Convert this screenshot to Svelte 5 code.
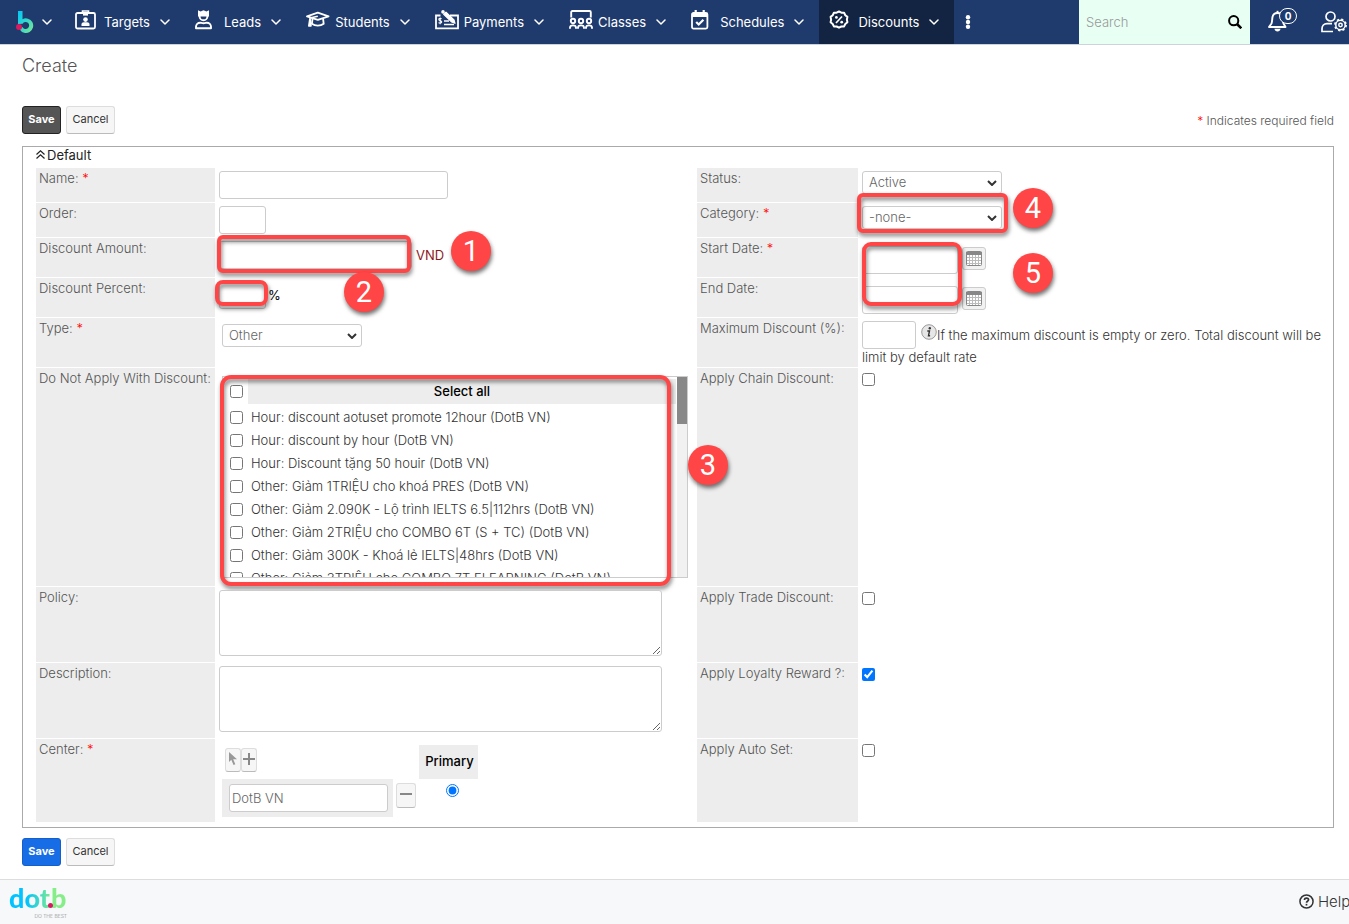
<script>
  const modules = [
    { name: 'Targets', icon: 'badge' },
    { name: 'Leads', icon: 'lead' },
    { name: 'Students', icon: 'cap' },
    { name: 'Payments', icon: 'cheque' },
    { name: 'Classes', icon: 'class' },
    { name: 'Schedules', icon: 'calendar' },
    { name: 'Discounts', icon: 'percent', active: true }
  ];

  const discounts = [
    'Hour: discount aotuset promote 12hour (DotB VN)',
    'Hour: discount by hour (DotB VN)',
    'Hour: Discount tặng 50 houir (DotB VN)',
    'Other: Giảm 1TRIỆU cho khoá PRES (DotB VN)',
    'Other: Giảm 2.090K - Lộ trình IELTS 6.5|112hrs (DotB VN)',
    'Other: Giảm 2TRIỆU cho COMBO 6T (S + TC) (DotB VN)',
    'Other: Giảm 300K - Khoá lẻ IELTS|48hrs (DotB VN)',
    'Other: Giảm 3TRIỆU cho COMBO 7T ELEARNING (DotB VN)'
  ];
</script>

{#snippet chevron()}
  <svg class="chevron" viewBox="0 0 10 6" width="10" height="6" aria-hidden="true">
    <path d="M1 1l4 4 4-4" fill="none" stroke="currentColor" stroke-width="1.5" stroke-linecap="round" stroke-linejoin="round" />
  </svg>
{/snippet}

{#snippet moduleIcon(kind)}
  {#if kind === 'badge'}
    <svg viewBox="0 0 22 20" width="22" height="20" fill="none" stroke="currentColor" stroke-width="1.8">
      <rect x="1" y="3" width="19" height="15.5" rx="1.5" />
      <path d="M7.5 3.5V1h6v2.5" stroke-width="1.6" />
      <rect x="8" y="2" width="5" height="3.6" fill="currentColor" stroke="none" />
      <circle cx="10.5" cy="9.6" r="2.3" fill="currentColor" stroke="none" />
      <path d="M6.5 16v-1.500c0-1.400 1-2.200 2.400-2.200h3.200c1.400 0 2.400.8 2.400 2.200V16z" fill="currentColor" stroke="none" />
    </svg>
  {:else if kind === 'lead'}
    <svg viewBox="0 0 18 20" width="18" height="20" fill="none" stroke="currentColor" stroke-width="1.9">
      <path d="M3 .3l2.600 1.300L8.500.2l2.900 1.400L14 .3v6.200H3z" fill="currentColor" stroke="none" />
      <path d="M4.600 5v1.400a3.900 3.900 0 0 0 7.800 0V5" />
      <path d="M1 18.200v-1.400c0-2.400 1.800-4.100 4.200-4.100 1 0 1.600.6 3.300.6s2.300-.6 3.300-.6c2.400 0 4.200 1.700 4.200 4.100v1.400z" stroke-linejoin="round" />
    </svg>
  {:else if kind === 'cap'}
    <svg viewBox="0 0 24 20" width="24" height="20" fill="none" stroke="currentColor" stroke-width="1.8" stroke-linejoin="round">
      <path d="M1 6.300L11.800 2.600 22.600 6.300 11.800 9.800z" />
      <path d="M11.800 6.300L4 8v3" stroke-width="1.5" />
      <path d="M6.500 8.800l-.6 5c3.300 2.400 8.500 2.400 11.800 0l-.6-5" />
      <path d="M3.900 9.500l-1 6.300h2z" fill="currentColor" />
    </svg>
  {:else if kind === 'cheque'}
    <svg viewBox="0 0 24 20" width="24" height="20" fill="none" stroke="currentColor" stroke-width="1.8">
      <path d="M5.500 5.500H1v12.800h22V5.500h-8" />
      <path d="M6.600 8.700c-1.800-.9-3.200 0-2.700 1.100.4 1 2.500.7 2.800 2 .2 1.300-1.800 1.800-3.200.8M5.200 7.500v6.800" stroke-width="1.1" />
      <path d="M9 11h5M9 14.500h10" stroke-width="1.5" />
      <path d="M8.700 4.300l8 7.700 3.300 1.300-1-3.400-8-7.700z" fill="currentColor" stroke-width="1.2" stroke-linejoin="round" />
      <circle cx="8" cy="1.9" r="1.8" fill="currentColor" stroke="none" />
    </svg>
  {:else if kind === 'class'}
    <svg viewBox="0 0 24 20" width="24" height="20" fill="none" stroke="currentColor" stroke-width="1.9">
      <path d="M2.200 7.500V2.200Q2.200 1 3.400 1h17.200q1.200 0 1.200 1.200v5.300" />
      <circle cx="4" cy="11" r="2.2" /><circle cx="12" cy="11" r="2.2" /><circle cx="20" cy="11" r="2.2" />
      <path d="M1 18.800v-1q0-2.400 3-2.400t3 2.400v1M9 18.800v-1q0-2.400 3-2.400t3 2.400v1M17 18.800v-1q0-2.400 3-2.400t3 2.400v1" />
    </svg>
  {:else if kind === 'calendar'}
    <svg viewBox="0 0 18 20" width="18" height="20" fill="none" stroke="currentColor" stroke-width="1.8">
      <rect x="1" y="3" width="15.4" height="15.6" rx="1.5" />
      <path d="M1 3h15.400v4H1z" fill="currentColor" stroke="none" />
      <path d="M4.700 0v4M12.700 0v4" stroke-width="2.2" />
      <path d="M5.200 12l2.500 2.500 4.700-4.800" stroke-width="2.2" />
    </svg>
  {:else}
    <svg viewBox="0 0 20 20" width="20" height="20" fill="none" stroke="currentColor" stroke-width="2">
      <path d="M10 1.500l2.400 1.200 2.700.1 1.200 2.400 2.100 1.700-.5 2.700.5 2.700-2.100 1.700-1.200 2.400-2.700.1-2.400 1.200-2.400-1.200-2.700-.1-1.200-2.400-2.100-1.700.5-2.700-.5-2.700 2.100-1.700 1.200-2.400 2.700-.1z" stroke-linejoin="round" />
      <path d="M13 6.500l-6 6.500" stroke-width="1.7" />
      <circle cx="7.4" cy="7.4" r="1.4" fill="currentColor" stroke="none" />
      <circle cx="12.7" cy="12.2" r="1.4" fill="currentColor" stroke="none" />
    </svg>
  {/if}
{/snippet}

{#snippet calendarGrid()}
  <svg viewBox="0 0 16 15" width="16" height="15" aria-hidden="true">
    <rect x=".5" y=".5" width="15" height="14" rx="1" fill="#fff" stroke="#888" />
    <path d="M0 1h16v3H0z" fill="#888" />
    <path d="M1 6.500h14M1 9.500h14M1 12.500h14M3.500 4v10M6.500 4v10M9.500 4v10M12.500 4v10" stroke="#bbb" />
  </svg>
{/snippet}

<header>
  <button class="brand" aria-label="Home">
    <svg viewBox="0 0 18 22" width="18" height="22">
      <defs>
        <linearGradient id="mark" x1="0" y1="0" x2="1" y2="1">
          <stop offset="0" stop-color="#00c8f8" /><stop offset=".5" stop-color="#35d6cc" /><stop offset="1" stop-color="#7eea8c" />
        </linearGradient>
      </defs>
      <path fill="url(#mark)" fill-rule="evenodd" d="M2 0h4.500v8.200A7.300 7.300 0 1 1 3.700 18.500L6.500 16A3.500 3.500 0 1 0 6.600 12.800L2 13z" />
      <circle cx="3" cy="16" r="3" fill="#d81b60" />
    </svg>
    {@render chevron()}
  </button>
  <nav>
    {#each modules as m}
      <button class="module" class:active={m.active}>
        <span class="slot" aria-hidden="true">{@render moduleIcon(m.icon)}</span>
        <span class="name">{m.name}</span>
        {@render chevron()}
      </button>
    {/each}
    <button class="more" aria-label="More">
      <svg viewBox="0 0 6 14" width="6" height="14" fill="currentColor">
        <circle cx="3" cy="2.2" r="2.2" /><circle cx="3" cy="7" r="2.2" /><circle cx="3" cy="11.8" r="2.2" />
      </svg>
    </button>
  </nav>
  <div class="search">
    <input type="search" placeholder="Search" aria-label="Search" />
    <button aria-label="Run search">
      <svg viewBox="0 0 14 14" width="14" height="14" fill="none" stroke="#000" stroke-width="2">
        <circle cx="5.7" cy="5.7" r="4.6" /><path d="M9 9l4.300 4.300" stroke-width="2.5" />
      </svg>
    </button>
  </div>
  <button class="bell" aria-label="Notifications">
    <svg viewBox="0 0 20 22" width="20" height="22" fill="none" stroke="currentColor" stroke-width="1.9">
      <path d="M1 17h16.500l-2-3.500c-.7-1.500-.6-4.500-1-6.500C14 4.500 12 3 9.500 3S5 4.500 4.500 7c-.4 2-.3 5-1 6.500z" stroke-linejoin="round" />
      <path d="M9.500 3V.8" /><path d="M6.500 18.800h6c-.3 1.700-1.300 2.600-3 2.600s-2.700-.9-3-2.600z" fill="currentColor" stroke="none" />
    </svg>
    <span class="count">0</span>
  </button>
  <button class="user" aria-label="User settings">
    <svg viewBox="0 0 26 22" width="26" height="22" fill="none" stroke="currentColor" stroke-width="1.7">
      <circle cx="9.5" cy="5.5" r="4.5" />
      <path d="M12 20.500H1v-2.700C1 14.500 3 12.700 6 12.700h5" />
      <circle cx="19.5" cy="14" r="4.7" stroke-width="1.5" />
      <circle cx="19.5" cy="14" r="5.6" stroke-width="1.7" stroke-dasharray="2.2 2.2" />
      <circle cx="19.5" cy="14" r="1.7" stroke-width="1.5" />
    </svg>
  </button>
</header>

<main>
  <h1>Create</h1>
  <div class="actions top">
    <button class="btn dark">Save</button>
    <button class="btn">Cancel</button>
    <p class="legend"><span class="req">*</span> Indicates required field</p>
  </div>

  <section class="panel">
    <h2>
      <svg viewBox="0 0 9 9" width="9" height="9" fill="none" stroke="currentColor" stroke-width="1.2" aria-hidden="true">
        <path d="M.5 4.500l4-3.700 4 3.700M.5 8.500l4-3.700 4 3.700" />
      </svg>
      Default
    </h2>

    <div class="row r-line">
      <label for="name">Name: <span class="req">*</span></label>
      <div class="cell"><input id="name" type="text" class="w-name" /></div>
      <label for="status">Status:</label>
      <div class="cell"><select id="status"><option>Active</option></select></div>
    </div>

    <div class="row r-line">
      <label for="order">Order:</label>
      <div class="cell"><input id="order" type="text" class="w-small" /></div>
      <label for="category">Category: <span class="req">*</span></label>
      <div class="cell">
        <select id="category"><option>-none-</option></select>
        <span class="mark m4"></span><span class="pin p4">4</span>
      </div>
    </div>

    <div class="row r-mid">
      <label for="amount">Discount Amount:</label>
      <div class="cell">
        <input id="amount" type="text" class="w-amount" /><span class="currency">VND</span>
        <span class="mark m1"></span><span class="pin p1">1</span>
      </div>
      <label for="start">Start Date: <span class="req">*</span></label>
      <div class="cell date">
        <input id="start" type="text" class="w-date" /><button class="cal" aria-label="Pick start date">{@render calendarGrid()}</button>
        <span class="mark m5"></span><span class="pin p5">5</span>
      </div>
    </div>

    <div class="row r-mid">
      <label for="percent">Discount Percent:</label>
      <div class="cell">
        <input id="percent" type="text" class="w-small" /><span class="unit">%</span>
        <span class="mark m2"></span><span class="pin p2">2</span>
      </div>
      <label for="end">End Date:</label>
      <div class="cell date">
        <input id="end" type="text" class="w-date" /><button class="cal" aria-label="Pick end date">{@render calendarGrid()}</button>
      </div>
    </div>

    <div class="row r-type">
      <label for="type">Type: <span class="req">*</span></label>
      <div class="cell inset"><select id="type"><option>Other</option></select></div>
      <label for="max">Maximum Discount (%):</label>
      <div class="cell prose">
        <input id="max" type="text" class="w-max" /><svg class="info" viewBox="0 0 16 16" width="16" height="16" aria-hidden="true">
          <circle cx="8" cy="8" r="7.3" fill="#e6e6e6" stroke="#999" />
          <circle cx="8.8" cy="4.3" r="1.2" fill="#333" />
          <path d="M6.300 7h2.200l-1 4.700h1.600" fill="none" stroke="#333" stroke-width="1.4" />
        </svg>If the maximum discount is empty or zero. Total discount will be limit by default rate
      </div>
    </div>

    <div class="row r-list">
      <div class="label">Do Not Apply With Discount:</div>
      <div class="cell inset list-cell">
        <div class="picker">
          <div class="options">
            <div class="all">
              <input id="all" type="checkbox" />
              <label for="all">Select all</label>
            </div>
            {#each discounts as d}
              <label class="option"><input type="checkbox" /><span>{d}</span></label>
            {/each}
          </div>
          <div class="track"><div class="thumb"></div></div>
        </div>
        <span class="mark m3"></span><span class="pin p3">3</span>
      </div>
      <label for="chain">Apply Chain Discount:</label>
      <div class="cell check"><input id="chain" type="checkbox" /></div>
    </div>

    <div class="row r-text">
      <label for="policy">Policy:</label>
      <div class="cell"><textarea id="policy"></textarea></div>
      <label for="trade">Apply Trade Discount:</label>
      <div class="cell check"><input id="trade" type="checkbox" /></div>
    </div>

    <div class="row r-text">
      <label for="description">Description:</label>
      <div class="cell"><textarea id="description"></textarea></div>
      <label for="loyalty">Apply Loyalty Reward ?:</label>
      <div class="cell check"><input id="loyalty" type="checkbox" checked /></div>
    </div>

    <div class="row r-center">
      <label for="center">Center: <span class="req">*</span></label>
      <div class="cell inset">
        <div class="centers">
          <div class="pair">
            <button class="tool" aria-label="Select center">
              <svg viewBox="0 0 8 13" width="8" height="13"><path d="M0 0v10l2.300-2.200L4.500 13l1.800-.8L4.200 7.300H8z" fill="#999" /></svg>
            </button>
            <button class="tool" aria-label="Add center">
              <svg viewBox="0 0 12 12" width="12" height="12"><path d="M6 0v12M0 6h12" stroke="#888" stroke-width="2" /></svg>
            </button>
          </div>
          <div class="primary" id="primary">Primary</div>
          <div class="chosen"><input id="center" type="text" value="DotB VN" /></div>
          <button class="tool minus" aria-label="Remove center">
            <svg viewBox="0 0 12 12" width="12" height="12"><path d="M0 6h12" stroke="#888" stroke-width="2" /></svg>
          </button>
          <div class="radio"><input type="radio" checked aria-labelledby="primary" /></div>
        </div>
      </div>
      <label for="auto">Apply Auto Set:</label>
      <div class="cell check"><input id="auto" type="checkbox" /></div>
    </div>
  </section>

  <div class="actions">
    <button class="btn blue">Save</button>
    <button class="btn">Cancel</button>
  </div>
</main>

<footer>
  <div class="wordmark">
    <div class="word"><span>dot</span><i></i><span>b</span></div>
    <small>DO THE BEST</small>
  </div>
  <a class="help" href="#help">
    <svg viewBox="0 0 16 16" width="15" height="15" fill="none" stroke="currentColor" stroke-width="1.6" aria-hidden="true">
      <circle cx="8" cy="8" r="7" />
      <path d="M5.800 6.300c0-1.300 1-2 2.200-2s2.200.7 2.200 1.900c0 1.500-2.200 1.500-2.200 3" stroke-width="1.8" />
      <path d="M8 10.500v1.800" stroke-width="1.8" />
    </svg>
    Help
  </a>
</footer>

<style>
  :global(body) {
    background: #fff;
    overflow-x: hidden;
    font-family: Inter, 'Liberation Sans', sans-serif;
    font-size: 13px;
    font-weight: 300;
    color: #333;
  }
  :global(*) { box-sizing: border-box; }
  button, input, select, textarea { font: inherit; color: inherit; margin: 0; }
  button { cursor: pointer; padding: 0; }
  h1, h2, p { margin: 0; font-weight: inherit; }

  header {
    display: flex;
    height: 45px;
    background: #1f3b6d;
    border-bottom: 1px solid #ccd3dc;
    color: #fff;
  }
  header button { background: none; border: 0; display: flex; align-items: center; }
  .brand { width: 65px; padding-left: 16px; gap: 8px; flex: none; }
  nav { display: flex; flex: 1; }
  .module { padding: 0 15px 0 10px; font-weight: 400; }
  .module.active { background: #132442; }
  .slot { width: 29px; display: flex; padding-bottom: 4px; }
  .name { margin-right: 10px; }
  .more { padding: 0 11px; }
  .search { display: flex; width: 171px; background: #e8fff4; }
  .search input {
    flex: 1; min-width: 0; border: 0; background: none; padding: 0 7px; outline: 0; color: #333;
  }
  .search input::placeholder { color: #999; opacity: 1; }
  .search button { padding: 0 8px; }
  .bell { width: 71px; padding: 0 0 2px 18px; position: relative; }
  .count {
    position: absolute; left: 29px; top: 8px; width: 18px; height: 16px;
    border: 1px solid #fff; border-radius: 8px; background: #1f3b6d;
    font-size: 10px; line-height: 14px; font-weight: 700; text-align: center;
  }
  .user { padding-right: 2px; }

  main { padding: 11px 15px 13px 22px; }
  h1 { font-size: 18px; line-height: 20px; color: #555; }
  .actions { display: flex; gap: 5px; margin-top: 10px; }
  .actions.top { margin: 30px 0 12px; align-items: center; }
  .btn {
    min-width: 49px; height: 28px; padding: 0 5px 1px; font-size: 11px; font-weight: 400; line-height: 25px;
    border: 1px solid #ddd; border-bottom-color: #bbb; border-radius: 3px; background: #f6f6f6; color: #333;
  }
  .btn.dark, .btn.blue { min-width: 39px; font-weight: 700; color: #fff; }
  .btn.dark { background: #555; border-color: #222; }
  .btn.blue { background: #176de5; border-color: #145fc8; }
  .legend { margin-left: auto; font-size: 12px; color: #555; }
  .req { color: #f00; }

  .panel { border: 1px solid #aaa; padding: 0 0 4px 13px; }
  h2 {
    display: flex; align-items: center; gap: 2px; height: 21px; padding-bottom: 6px;
    font-size: 13px; font-weight: 400; color: #222;
  }
  .row { display: grid; grid-template-columns: 179px minmax(0, 482fr) 161px minmax(0, 475fr); }
  .row > label, .row > .label {
    background: #ededed; border-bottom: 1px solid #fff; padding: 2px 0 0 3px; line-height: 16px;
    color: #555; white-space: nowrap;
  }
  .cell { position: relative; padding: 3px 4px; }
  .cell.inset { padding: 6px 7px; }
  .r-line { min-height: 35px; }
  .r-mid { min-height: 40px; }
  .r-type { min-height: 50px; }
  .r-list { min-height: 219px; }
  .r-text { min-height: 76px; }
  .r-center { min-height: 84px; }

  input[type='text'], select, textarea {
    border: 1px solid #ccc; border-radius: 3px; background: #fff; color: #666; outline: 0;
  }
  input[type='text'] { height: 28px; padding: 0 2px; }
  select {
    display: block; width: 140px; height: 23px; padding: 0 6px 1px; appearance: none;
    background: #fff url("data:image/svg+xml,%3Csvg xmlns='http://www.w3.org/2000/svg' viewBox='0 0 10 6'%3E%3Cpath d='M1 1l4 4 4-4' fill='none' stroke='%23333' stroke-width='2'/%3E%3C/svg%3E") no-repeat right 4px center / 10px 6px;
  }
  input[type='checkbox'], input[type='radio'] { width: 13px; height: 13px; display: block; flex: none; }
  textarea { display: block; width: 443px; max-width: 100%; height: 66px; }
  .w-name { width: 229px; }
  .w-small { width: 47px; }
  .w-amount { width: 193px; }
  .w-date { width: 96px; }
  .w-max { width: 54px; }
  .currency { margin-left: 4px; font-weight: 400; color: #8b1a1a; }
  .unit { margin-left: 2px; font-weight: 400; color: #000; }
  .date { display: flex; align-items: center; gap: 4px; padding: 7px 4px 4px; }
  .date input { flex: none; }
  .cal {
    display: grid; place-items: center; width: 24px; height: 23px; margin-bottom: 3px;
    border: 1px solid #ccc; border-radius: 3px; background: #f2f2f2;
  }
  .cell.prose { padding-bottom: 0; line-height: 16px; color: #333; }
  .info { margin: 0 0 0 5px; vertical-align: 0; }
  .check { padding-top: 5px; }

  .list-cell.inset { padding-top: 8px; }
  .picker { display: flex; width: 466px; max-width: 100%; height: 202px; border: 1px solid #ccc; }
  .options { flex: 1; min-width: 0; overflow-y: auto; scrollbar-width: none; padding: 2px 1px 0 7px; color: #333; }
  .all { display: flex; align-items: center; gap: 5px; height: 25px; margin-bottom: 2px; }
  .all label { flex: 1; line-height: 25px; background: #ededed; text-align: center; font-weight: 500; color: #000; }
  .option { display: flex; align-items: center; gap: 8px; height: 23px; white-space: nowrap; }
  .option span { padding-bottom: 2px; }
  .track { width: 10px; background: #f1f1f1; flex: none; }
  .thumb { height: 47px; background: #888; }

  .centers { display: grid; grid-template-columns: 171px 26px 59px; grid-template-rows: 34px 38px; }
  .pair { grid-column: 1 / 3; display: flex; padding: 3px; }
  .tool {
    display: grid; place-items: center; width: 16px; height: 24px; padding: 0 0 3px;
    border: 1px solid #ddd; border-bottom-color: #bbb; border-radius: 3px; background: #f6f6f6;
  }
  .minus { width: 20px; height: 25px; margin: 4px 3px; }
  .primary { background: #ededed; padding-left: 2px; line-height: 33px; text-align: center; font-weight: 500; color: #000; }
  .chosen { background: #ededed; padding: 5px 5px 5px 7px; }
  .chosen input { width: 100%; }
  .radio { display: flex; justify-content: center; padding: 5px 0 0 8px; }

  .mark {
    position: absolute; border: 4px solid #ff4545; border-radius: 6px; pointer-events: none;
    filter: drop-shadow(1px 3px 2px rgba(0, 0, 0, 0.5));
  }
  .m1 { left: 2px; top: -3px; width: 194px; height: 38px; }
  .m2 { left: 0; top: 2px; width: 53px; height: 26px; border-radius: 8px; }
  .m3 { left: 5px; top: 7px; width: 451px; height: 211px; border-radius: 11px; }
  .m4 { left: -1px; top: -10px; width: 151px; height: 40px; }
  .m5 { left: 4px; top: 4px; width: 100px; height: 64px; border-radius: 9px; z-index: 1; }
  .pin {
    position: absolute; width: 40px; height: 40px; border-radius: 50%; background: #ff4545; color: #fff;
    font: 29px/41px Roboto, 'Liberation Sans', sans-serif; text-align: center; z-index: 1;
    box-shadow: 1px 3px 4px rgba(0, 0, 0, 0.55);
  }
  .p1 { left: 236px; top: -7px; }
  .p2 { left: 129px; top: -6px; }
  .p3 { left: 473px; top: 77px; }
  .p4 { left: 155px; top: -15px; }
  .p5 { left: 155px; top: 15px; }

  footer {
    display: flex; justify-content: space-between; align-items: center;
    height: 45px; padding-left: 9px; background: #f6f8fa; border-top: 1px solid #ddd;
  }
  .wordmark { display: flex; flex-direction: column; width: 58px; height: 38px; }
  .word {
    display: flex; align-items: baseline; font: 900 27px/30px Lato, sans-serif;
    background: linear-gradient(90deg, #00c3ff 30%, #86ee88 75%); background-clip: text; color: transparent;
  }
  .word i { width: 5px; height: 5px; margin: 0 -2px; border-radius: 50%; background: #d81b60; z-index: 1; }
  small { font-size: 5px; line-height: 6px; text-align: right; color: #888; }
  .help {
    display: flex; align-items: center; gap: 4px; width: 50px; padding-bottom: 1px; font-size: 15px;
    color: #333; text-decoration: none; white-space: nowrap;
  }
  .help svg { flex: none; }
</style>
